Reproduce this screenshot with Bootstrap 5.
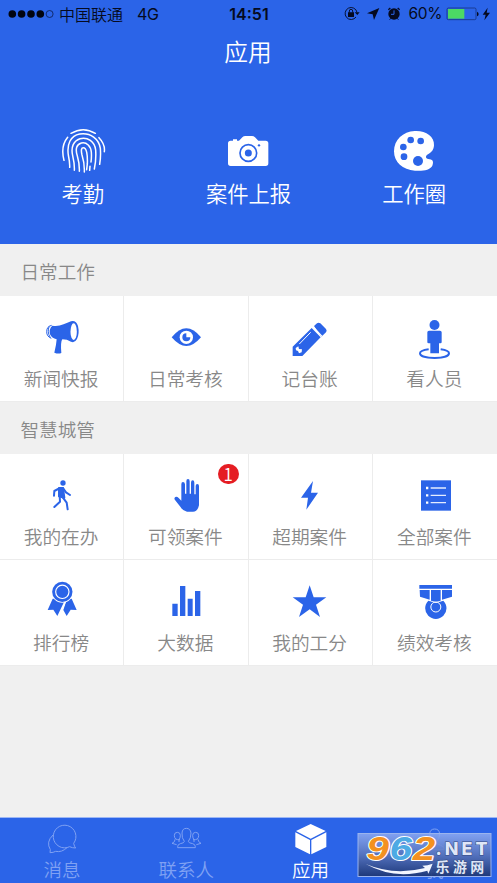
<!DOCTYPE html>
<html lang="zh-CN">
<head>
<meta charset="utf-8">
<meta name="viewport" content="width=device-width, initial-scale=1">
<title>应用</title>
<link href="https://cdn.jsdelivr.net/npm/bootstrap@5.3.0/dist/css/bootstrap.min.css" rel="stylesheet">
<style>
:root{--brand:#2b64e8}
body{font-family:Inter,"Noto Sans CJK SC",sans-serif;font-weight:350;background:#f0f0f0;color:#888;height:883px;overflow:hidden}
svg{display:block;flex:none}
.brand-bg{background:var(--brand)}
.hero{height:244px}
.status{height:28px;font-size:16px;line-height:28px;color:#050a20;padding:0 5px 0 8px;font-weight:400}
.status .carrier{font-weight:350;font-family:"Noto Sans CJK SC",sans-serif;margin-left:5px}
.status .net{margin-left:14px;letter-spacing:-.4px}
.status .clock{margin-right:2px}
.status .level{margin-left:3px;font-size:15.5px;letter-spacing:-.4px}
.page-title{font-size:23.7px;line-height:30px;padding-top:10px;padding-right:1px;font-weight:350}
.shortcuts{padding-top:59px}
.shortcuts span{font-size:21.3px;line-height:30px;margin-top:4px}
.section-title{height:52px;padding:5px 0 0 20.5px;font-size:18.6px;font-weight:350}
.tile{height:106px;padding-top:19px;border-right:1.5px solid #ececec;border-bottom:1.5px solid #ececec;color:var(--brand);background:#fff}
.tile:nth-child(4n){border-right:0}
.tile-label{font-size:18.7px;line-height:28px;color:#888;margin-top:7px;margin-right:1px}
.count{position:absolute;top:10px;right:8.5px;width:21.5px;height:20px;border-radius:10px;background:#e51d23;color:#fff;font-size:17px;line-height:20px;text-align:center;font-family:"Noto Sans CJK SC",sans-serif}
.tabs{height:66px;padding-top:3px;border-top:1px solid #9db7f5;color:#7fa1f3}
.tabs span{font-size:18.5px;line-height:26px}
.tabs .current{color:#fff}
.stamp{position:absolute;right:5px;bottom:6px}
</style>
</head>
<body class="d-flex flex-column position-relative">
<header class="hero brand-bg text-white flex-shrink-0">
  <div class="status d-flex align-items-center">
    <div class="d-flex align-items-center col">
      <svg width="46" height="10" viewBox="0 0 46 10"><g fill="#020510"><circle cx="4.3" cy="5" r="3.8"/><circle cx="13.6" cy="5" r="3.8"/><circle cx="23" cy="5" r="3.8"/><circle cx="32.3" cy="5" r="3.8"/></g><circle cx="41.6" cy="5" r="3.5" fill="none" stroke="#0b1d50" stroke-width=".8"/></svg>
      <span class="carrier">中国联通</span><span class="net">4G</span>
    </div>
    <strong class="clock fw-semibold">14:51</strong>
    <div class="d-flex align-items-center justify-content-end col">
      <svg width="64" height="20" viewBox="288 12 192 60"><g fill="none" stroke="#071233" stroke-width="3"><path d="M330 51a18 18 0 1 1 3-14"/><path d="M310 38v-5a5 5 0 0 1 10 0v5"/></g><path d="M306 37h18v14h-18zM326 37h15l-7 8zM400 24l-16 36-4-17-17-3z" fill="#050a20"/><circle cx="444" cy="42" r="17" fill="#050a20"/><path d="M427 29l6-5M461 29l-6-5" stroke="#050a20" stroke-width="4"/><path d="M434 55l-3 4M454 55l3 4" stroke="#050a20" stroke-width="3"/><path d="M444 31v12h-9" fill="none" stroke="#2b64e8" stroke-width="3"/></svg>
      <span class="level">60%</span>
      <svg class="ms-1" width="46" height="20" viewBox="597 12 138 60"><rect x="600" y="24" width="87" height="35" rx="4" fill="none" stroke="#14296a" stroke-width="2"/><path d="M603 27h49v29h-49z" fill="#4cd964"/><path d="M690 35q5 2 5 7t-5 7z" fill="#050a20"/><path d="M722 23l-15 21h9l-4 17 17-23h-10z" fill="#050a20"/></svg>
    </div>
  </div>
  <h1 class="page-title text-center m-0">应用</h1>
  <nav class="shortcuts row row-cols-3 g-0">
    <div class="d-flex flex-column align-items-center">
      <svg width="48" height="48" viewBox="57 36 144 144" fill="none" stroke="#fff" stroke-width="4.500" stroke-linecap="round"><path d="M93 55Q130 33 166 55M83 67Q61 94 72 136M177 68Q196 88 193 110M89 157Q90 145 85 120C80 87 92 62 119 57C152 52 177 72 181 100Q183 124 179 148M103 166Q104 148 98 122C92 96 101 77 120 71C143 65 164 80 167 105Q169 134 163 162M118 169Q119 147 112 123C105 101 110 88 124 84C140 80 153 94 154 112Q155 128 153 141M150 154L149 166M133 171Q134 145 126 120Q121 98 130 98C140 98 143 120 142 146L140 164"/></svg>
      <span>考勤</span>
    </div>
    <div class="d-flex flex-column align-items-center">
      <svg width="48" height="48" viewBox="553 36 144 144"><path d="M573 77h7v-4h12v4h6l10-10q4-4 9-4h20q5 0 9 4l10 10h22q8 0 8 8v60q0 8-8 8H573q-8 0-8-8V85q0-8 8-8z" fill="#fff"/><circle cx="626" cy="114" r="25" fill="none" stroke="#2b64e8" stroke-width="5"/><circle cx="626" cy="114" r="10.500" fill="#2b64e8"/><circle cx="658" cy="91" r="3.500" fill="#2b64e8"/></svg>
      <span>案件上报</span>
    </div>
    <div class="d-flex flex-column align-items-center">
      <svg width="48" height="48" viewBox="360 36 144 144"><path d="M434 48C466 46 494 63 492 91C491 106 484 112 474 118C463 125 468 132 479 133C490 134 491 143 487 152C480 165 459 169 435 167C398 165 372 142 372 109C372 74 399 50 434 48Z" fill="#fff"/><g fill="#2b64e8"><circle cx="422" cy="75" r="10"/><circle cx="452" cy="78" r="10"/><circle cx="400" cy="96" r="10"/><circle cx="402" cy="125" r="10"/><circle cx="444" cy="138" r="15"/></g></svg>
      <span>工作圈</span>
    </div>
  </nav>
</header>

<main class="flex-grow-1">
  <h2 class="section-title d-flex align-items-center m-0">日常工作</h2>
  <section class="row row-cols-4 g-0">
    <div class="tile d-flex flex-column align-items-center">
      <svg width="44" height="44" viewBox="118 210 132 132" fill="currentColor"><path d="M155 242C174 247 194 236 211 229Q226 225 232 243Q237 265 229 282Q222 295 211 290Q199 283 185 283Q179 291 182 324Q173 328 161 323Q167 299 168 283Q153 280 148 268Q144 252 155 242Z"/><ellipse cx="219" cy="260" rx="9.500" ry="25" fill="#fff"/><path d="M153 241Q138 244 138 260Q138 275 152 280M146 244Q138 260 149 278" fill="none" stroke="currentColor" stroke-width="3"/></svg>
      <span class="tile-label">新闻快报</span>
    </div>
    <div class="tile d-flex flex-column align-items-center">
      <svg width="44" height="44" viewBox="491 210 132 132" fill="currentColor"><path d="M514 277Q536 250 558 250T602 277Q580 303 558 303T514 277Z"/><circle cx="558" cy="277" r="20" fill="#fff"/><path d="M558 265v12h12a12 12 0 1 1-12-12z"/></svg>
      <span class="tile-label">日常考核</span>
    </div>
    <div class="tile d-flex flex-column align-items-center">
      <svg width="44" height="44" viewBox="123 75 132 132" fill="currentColor"><path d="M201 108l9-8q5-4 10 0l17 17q4 5 0 10l-14 13zM194 114l27 28-55 56h-29v-28z"/><path d="M191 127l-34 35" stroke="#fff" stroke-width="3"/><path d="M198 110l27 29" stroke="#fff" stroke-width="4"/><path d="M146 174l8-5 2 8 9 1-1 9-8 3-3-7-6-2z" fill="#fff"/></svg>
      <span class="tile-label">记台账</span>
    </div>
    <div class="tile d-flex flex-column align-items-center">
      <svg width="44" height="44" viewBox="495 75 132 132" fill="currentColor"><circle cx="559.500" cy="105" r="15"/><path d="M543 122h33q5 0 5 5v30q0 3-4 3h-4v30h-26v-30h-5q-4 0-4-3v-30q0-5 5-5z"/><path d="M542 178C528 180 516 184 516 190C516 199 536 204 560 204S603 199 603 190C603 184 592 180 578 178" fill="none" stroke="currentColor" stroke-width="6"/></svg>
      <span class="tile-label">看人员</span>
    </div>
  </section>

  <h2 class="section-title d-flex align-items-center m-0">智慧城管</h2>
  <section class="row row-cols-4 g-0">
    <div class="tile d-flex flex-column align-items-center">
      <svg width="44" height="44" viewBox="118 204 132 132" fill="none" stroke="currentColor" stroke-width="6" stroke-linecap="round" stroke-linejoin="round"><circle cx="187" cy="234" r="8" fill="currentColor" stroke="none"/><path d="M175 249h12l4 29-16-4z" fill="currentColor"/><path d="M178 249l-17 9-1 14M187 249l9 13 12 8M177 272l1 18-17 16M184 274l14 19 3 20"/></svg>
      <span class="tile-label">我的在办</span>
    </div>
    <div class="tile d-flex flex-column align-items-center position-relative">
      <svg width="44" height="44" viewBox="491 204 132 132" fill="currentColor"><path d="M543 287V238q0-7 5-7t6 7v28h4v-37q0-7 5-7t5 7v37h4v-33q0-7 5-7t5 7v35h4v-25q0-6 5-6t5 6v58q-4 19-18 19h-18q-14-3-20-15l-16-20q-4-6 1-9 5-2 10 3z"/></svg>
      <span class="tile-label">可领案件</span>
      <span class="count">1</span>
    </div>
    <div class="tile d-flex flex-column align-items-center">
      <svg width="44" height="44" viewBox="123 69 132 132" fill="currentColor"><path d="M198 93l-36 50h21l-5 36 35-51h-21z"/></svg>
      <span class="tile-label">超期案件</span>
    </div>
    <div class="tile d-flex flex-column align-items-center">
      <svg width="44" height="44" viewBox="495 69 132 132"><path d="M519 91h90v91h-90z" fill="currentColor"/><path d="M548 114h46M548 136h46M548 158h46" stroke="#e4ecff" stroke-width="4"/><path d="M534 114h7M534 136h7M534 158h7" stroke="#fff" stroke-width="7"/></svg>
      <span class="tile-label">全部案件</span>
    </div>
    <div class="tile d-flex flex-column align-items-center">
      <svg width="44" height="44" viewBox="118 57 132 132" fill="currentColor"><path d="M156 116l-15 34 17-1 12 19 20-42 6 0-8 24 10 18 12-19 18 1-15-34z"/><path d="M194 126l-10 25" stroke="#fff" stroke-width="3"/><circle cx="185" cy="95.500" r="33" fill="#fff"/><circle cx="185" cy="95.500" r="30.500"/><circle cx="185" cy="95.500" r="20" fill="none" stroke="#fff" stroke-width="3.500"/></svg>
      <span class="tile-label">排行榜</span>
    </div>
    <div class="tile d-flex flex-column align-items-center">
      <svg width="44" height="44" viewBox="491 57 132 132" fill="currentColor"><path d="M516 131h16v37h-16zM539 78h16v90h-16zM562 116h15v52h-15zM584 93h16v75h-16z"/></svg>
      <span class="tile-label">大数据</span>
    </div>
    <div class="tile d-flex flex-column align-items-center">
      <svg width="44" height="44" viewBox="123 57 132 132" fill="currentColor"><path d="M188 76l12 36h38l-31 22 12 37-31-23-32 23 12-37-31-22h39z"/></svg>
      <span class="tile-label">我的工分</span>
    </div>
    <div class="tile d-flex flex-column align-items-center">
      <svg width="44" height="44" viewBox="495 57 132 132" fill="currentColor"><path d="M514 75h98v11h-98zM515 90h30v29l-29-9zM549 90h29v32l-14 4-15-4zM582 90h30v20l-30 9z"/><path d="M541 122l23 7 22-7a32 32 0 1 1-45 0z"/><circle cx="563.500" cy="141" r="15" fill="none" stroke="#fff" stroke-width="3"/></svg>
      <span class="tile-label">绩效考核</span>
    </div>
  </section>
</main>

<footer class="tabs brand-bg row row-cols-4 g-0 flex-shrink-0">
  <div class="d-flex flex-column align-items-center">
    <svg width="36" height="36" viewBox="132 48 108 108" fill="none" stroke="currentColor" stroke-width="3" stroke-linejoin="round"><path d="M221 115a34 34 0 1 0-12 10q7 4 18 4-4-4-6-14zM159 90q-22 21-8 44l-1 9q10 0 17-4 18 4 34-11"/></svg>
    <span>消息</span>
  </div>
  <div class="d-flex flex-column align-items-center">
    <svg width="36" height="36" viewBox="505 48 108 108" fill="none" stroke="currentColor" stroke-width="3" stroke-linejoin="round"><path d="M554 109q-8-9-7-25 1-14 13-14t14 14q0 16-8 25 0 5 13 7 8 2 8 9v3h-53v-3q0-7 8-9 12-2 12-7zM541 104q-8 1-13-2-4-4-4-11 0-9 9-9t9 9q0 9-4 13v7M526 103q1 8-9 12l14 4M580 104q8 1 13-2 4-4 4-11 0-9-9-9t-9 9q0 9 4 13v7M595 103q0 8 9 12l-14 4"/></svg>
    <span>联系人</span>
  </div>
  <div class="current d-flex flex-column align-items-center">
    <svg width="36" height="36" viewBox="137 48 108 108" fill="#fff"><path d="M190 57l45 21-45 23-44-23zM144 82l44 23v43l-44-22zM192 105l45-23v44l-45 22z"/></svg>
    <span>应用</span>
  </div>
  <div class="d-flex flex-column align-items-center">
    <svg width="36" height="36" viewBox="510 48 108 108" fill="none" stroke="currentColor" stroke-width="3"><path d="M558 110q-11-8-10-23 1-15 15-15t15 15q0 15-10 23 0 8 13 11 12 4 12 12h-60q0-8 12-12 13-3 13-11z"/></svg>
    <span>我</span>
  </div>
</footer>

<svg class="stamp" width="135" height="44" viewBox="330 84 405 133">
  <defs><linearGradient id="plate" x2="0" y2="1"><stop stop-color="#8eabf3" stop-opacity=".86"/><stop offset=".5" stop-color="#5873b9" stop-opacity=".9"/><stop offset="1" stop-color="#1c3470" stop-opacity=".92"/></linearGradient></defs>
  <rect x="331.500" y="85.500" width="402" height="130" fill="url(#plate)" stroke="#9bb4ee" stroke-width="3"/>
  <g font-family="Liberation Sans,sans-serif" font-weight="700" font-style="italic" font-size="98" stroke="#fff" stroke-width="6" stroke-linejoin="round" paint-order="stroke">
    <text x="357" y="166" textLength="68" lengthAdjust="spacingAndGlyphs" fill="#f39120">9</text>
    <text x="427" y="166" textLength="68" lengthAdjust="spacingAndGlyphs" fill="#4daae4">6</text>
    <text x="497" y="166" textLength="68" lengthAdjust="spacingAndGlyphs" fill="#f39120">2</text>
  </g>
  <path d="M355 178Q440 214 534 190L526 183Q542 183 557 177Q551 193 544 207L541 198Q440 226 355 178Z" fill="#f3f6ff"/>
  <g fill="#dfe6f7" stroke="#35487d" stroke-width="3" paint-order="stroke">
    <text x="566" y="150" font-family="Inter,sans-serif" font-weight="800" font-size="54" textLength="157">.NET</text>
    <text x="566" y="201" font-family="Noto Sans CJK SC,sans-serif" font-weight="700" font-size="42" textLength="147">乐游网</text>
  </g>
</svg>
<script src="https://cdn.jsdelivr.net/npm/bootstrap@5.3.0/dist/js/bootstrap.bundle.min.js"></script>
</body>
</html>
